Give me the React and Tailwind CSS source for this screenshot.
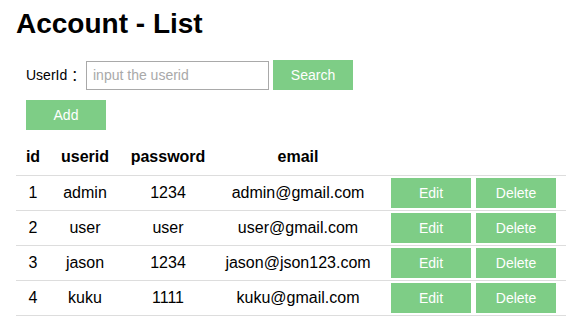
const accounts = [
  {id: 1, userid: 'admin', password: '1234', email: 'admin@gmail.com'},
  {id: 2, userid: 'user', password: 'user', email: 'user@gmail.com'},
  {id: 3, userid: 'jason', password: '1234', email: 'jason@json123.com'},
  {id: 4, userid: 'kuku', password: '1111', email: 'kuku@gmail.com'},
];

const GreenButton = ({children}) => (
  <button className="w-[80px] h-[30px] bg-[#7ecd86] text-white text-[14px] leading-[30px] text-center">
    {children}
  </button>
);

const App = () => {
  return (
    <div className="w-[582px] h-[335px] bg-white text-black pl-4 pt-2 font-['Liberation_Sans','Noto_Sans_CJK_SC',sans-serif]">
      <h1 className="text-[28px] leading-[32px] font-bold">Account - List</h1>

      <div className="flex items-center pl-[10px] mt-5 h-[30px]">
        <span className="text-[14px] leading-[20px] w-[55px] whitespace-nowrap">
          UserId<span className="ml-[4px]">：</span>
        </span>
        <input
          className="w-[183px] h-[29px] ml-[5px] border border-[#a9a9a9] px-[6px] text-[14px] outline-none placeholder:text-[#a9a9a9]"
          placeholder="input the userid"
        />
        <div className="ml-[4px]">
          <GreenButton>Search</GreenButton>
        </div>
      </div>

      <div className="pl-[10px] mt-[10px]">
        <GreenButton>Add</GreenButton>
      </div>

      <table className="mt-[10px] w-[550px] table-fixed border-collapse text-[16px]">
        <colgroup>
          <col className="w-[34px]" />
          <col className="w-[70px]" />
          <col className="w-[96px]" />
          <col className="w-[164px]" />
          <col className="w-[91px]" />
          <col className="w-[95px]" />
        </colgroup>
        <thead>
          <tr className="h-[35px] border-b border-[#dddddd]">
            <th className="font-bold text-center p-0">id</th>
            <th className="font-bold text-center p-0">userid</th>
            <th className="font-bold text-center p-0">password</th>
            <th className="font-bold text-center p-0">email</th>
            <th className="p-0"></th>
            <th className="p-0"></th>
          </tr>
        </thead>
        <tbody>
          {accounts.map(a => (
            <tr key={a.id} className="h-[35px] border-b border-[#dddddd]">
              <td className="text-center p-0">{a.id}</td>
              <td className="text-center p-0">{a.userid}</td>
              <td className="text-center p-0">{a.password}</td>
              <td className="text-center p-0">{a.email}</td>
              <td className="p-0 pl-[11px] align-middle">
                <div className="flex">
                  <GreenButton>Edit</GreenButton>
                </div>
              </td>
              <td className="p-0 pl-[5px] align-middle">
                <div className="flex">
                  <GreenButton>Delete</GreenButton>
                </div>
              </td>
            </tr>
          ))}
        </tbody>
      </table>
    </div>
  );
};

export default App;
